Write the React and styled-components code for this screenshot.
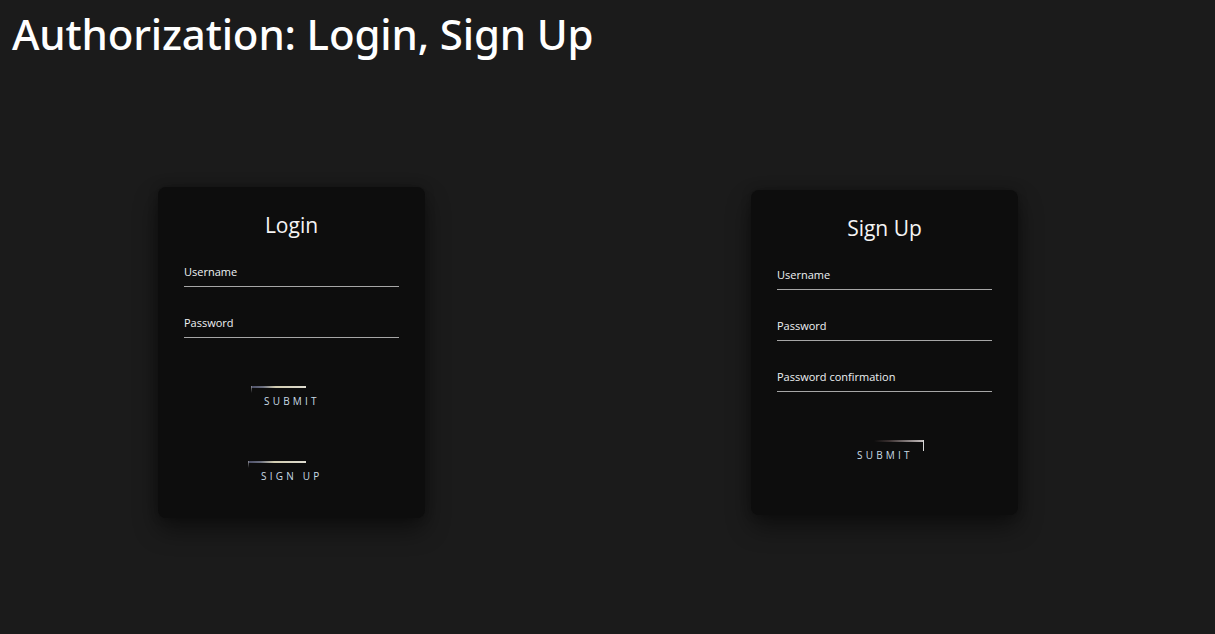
import React from "react";
import styled, { createGlobalStyle } from "styled-components";

const Global = createGlobalStyle`
  html, body { margin: 0; padding: 0; background: #1b1b1b; }
  body { font-family: "Open Sans", "Noto Sans", sans-serif; color: #fff; }
  * { box-sizing: border-box; }
`;

const Page = styled.div`
  height: 634px;
  display: flex;
  flex-direction: column;
  overflow: hidden;
`;

const Heading = styled.h1`
  margin: 0;
  padding: 8px 12px 0;
  height: 70px;
  font-family: "Noto Sans", sans-serif;
  font-weight: 500;
  font-size: 42px;
  line-height: 52px;
  letter-spacing: -0.15px;
  color: #fff;
`;

const Stage = styled.main`
  flex: 1;
  display: flex;
  align-items: center;
  padding-left: 158px;
  gap: 326px;
`;

const Card = styled.form`
  width: 267px;
  background: #0d0d0d;
  border-radius: 8px;
  padding: 23px 26px ${(p) => p.$bottom}px;
  box-shadow: 0 12px 24px rgba(0, 0, 0, 0.45), 0 0 10px rgba(0, 0, 0, 0.25);
  display: flex;
  flex-direction: column;
`;

const CardTitle = styled.h2`
  margin: 0 0 25px;
  text-align: center;
  font-family: "Open Sans", sans-serif;
  font-weight: 400;
  font-size: 21px;
  line-height: 30px;
  color: #f4f4f4;
`;

const Field = styled.label`
  display: block;
  & + & { margin-top: 29px; }
`;

const FieldLabel = styled.span`
  display: block;
  font-size: 11px;
  line-height: 14px;
  color: #eef2f4;
`;

const Input = styled.input`
  display: block;
  width: 100%;
  height: 8px;
  padding: 0;
  background: transparent;
  border: none;
  border-bottom: 1px solid #a6a6a6;
  outline: none;
  color: #fff;
`;

const Buttons = styled.div`
  margin-top: 48px;
  display: flex;
  flex-direction: column;
  align-items: center;
  gap: 47px;
`;

const NeonButton = styled.button`
  position: relative;
  width: ${(p) => p.$width}px;
  height: 28px;
  padding: 3px 0 0 13px;
  text-align: left;
  background: transparent;
  border: none;
  font-family: "Open Sans", sans-serif;
  font-size: 10px;
  line-height: 12px;
  letter-spacing: 3.2px;
  text-transform: uppercase;
  white-space: nowrap;
  color: #c9dbe6;
  cursor: pointer;
`;

const TopLine = styled.span`
  position: absolute;
  top: 0;
  height: 2px;
  ${(p) => (p.$right ? "right: 1px;" : "left: 0;")}
  width: ${(p) => p.$w}px;
  background: ${(p) =>
    p.$right
      ? "linear-gradient(90deg, transparent, #3a3030 30%, #c9c2c2 100%)"
      : "linear-gradient(90deg, #4a4d66 0%, #6c7080 22%, #d2ccb0 45%, #dedbd0 100%)"};
`;

const SideLine = styled.span`
  position: absolute;
  top: 0;
  ${(p) => (p.$right ? "right: 1px;" : "left: 0;")}
  width: 1px;
  height: ${(p) => p.$h}px;
  background: ${(p) => (p.$right ? "#d8d8d8" : "linear-gradient(180deg, #8a8a90, transparent)")};
`;

const Button = ({ children, right, line, side, width = 81 }) => (
  <NeonButton type="button" $width={width}>
    <TopLine $right={right} $w={line} />
    <SideLine $right={right} $h={side} />
    {children}
  </NeonButton>
);

export default function App() {
  return (
    <>
      <Global />
      <Page>
        <Heading>Authorization: Login, Sign Up</Heading>
        <Stage>
          <Card $bottom={29}>
            <CardTitle>Login</CardTitle>
            <Field>
              <FieldLabel>Username</FieldLabel>
              <Input type="text" />
            </Field>
            <Field>
              <FieldLabel>Password</FieldLabel>
              <Input type="password" />
            </Field>
            <Buttons>
              <Button line={55} side={7}>Submit</Button>
              <Button line={58} side={7} width={87}>Sign up</Button>
            </Buttons>
          </Card>
          <Card $bottom={47}>
            <CardTitle>Sign Up</CardTitle>
            <Field>
              <FieldLabel>Username</FieldLabel>
              <Input type="text" />
            </Field>
            <Field>
              <FieldLabel>Password</FieldLabel>
              <Input type="password" />
            </Field>
            <Field>
              <FieldLabel>Password confirmation</FieldLabel>
              <Input type="password" />
            </Field>
            <Buttons>
              <Button right line={50} side={11}>Submit</Button>
            </Buttons>
          </Card>
        </Stage>
      </Page>
    </>
  );
}
